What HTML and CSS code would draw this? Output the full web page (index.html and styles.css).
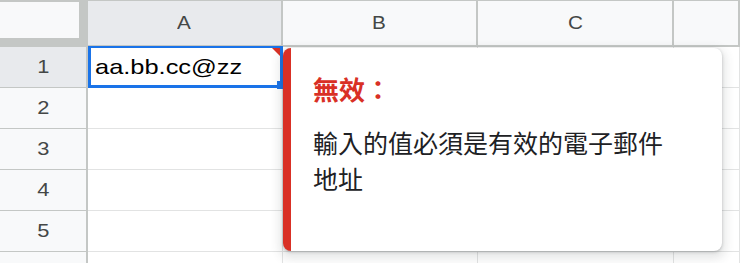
FILE: index.html
```html
<!DOCTYPE html>
<html lang="zh-Hant">
<head>
<meta charset="utf-8">
<title>Sheet validation</title>
<link rel="stylesheet" href="styles.css">
</head>
<body>
<div class="page">
  <div class="sheet">
    <div class="corner"><div class="corner-inner"></div></div>
    <div class="colhead sel"><span class="lbl">A</span></div>
    <div class="colhead"><span class="lbl">B</span></div>
    <div class="colhead"><span class="lbl">C</span></div>
    <div class="colhead"></div>

    <div class="rowhead sel"><span class="lbl">1</span></div>
    <div class="cell a1">
      <span class="val">aa.bb.cc@zz</span>
      <span class="flag"></span>
      <span class="handle"></span>
    </div>
    <div class="cell"></div><div class="cell"></div><div class="cell"></div>

    <div class="rowhead"><span class="lbl">2</span></div>
    <div class="cell"></div><div class="cell"></div><div class="cell"></div><div class="cell"></div>

    <div class="rowhead"><span class="lbl">3</span></div>
    <div class="cell"></div><div class="cell"></div><div class="cell"></div><div class="cell"></div>

    <div class="rowhead"><span class="lbl">4</span></div>
    <div class="cell"></div><div class="cell"></div><div class="cell"></div><div class="cell"></div>

    <div class="rowhead"><span class="lbl">5</span></div>
    <div class="cell"></div><div class="cell"></div><div class="cell"></div><div class="cell"></div>

    <div class="rowhead"></div>
    <div class="cell"></div><div class="cell"></div><div class="cell"></div><div class="cell"></div>
  </div>

  <div class="popup">
    <div class="popup-title">無效：</div>
    <div class="popup-text">輸入的值必須是有效的電子郵件地址</div>
  </div>
</div>
</body>
</html>
```

FILE: styles.css
```css
html, body {
  margin: 0;
  padding: 0;
  background: #ffffff;
  overflow: hidden;
}

.page {
  position: relative;
  width: 740px;
  height: 263px;
  overflow: hidden;
  font-family: "Liberation Sans", Arial, sans-serif;
}

.sheet {
  display: grid;
  grid-template-columns: 88px 195px 195px 196px 1fr;
  grid-template-rows: 47px repeat(5, 41px) 41px;
}

.corner {
  background: #c4c7c5;
  border-top: 1px solid #c4c7c5;
  box-sizing: border-box;
}

.corner-inner {
  width: 79px;
  height: 36px;
  margin-top: 1px;
  background: #f8f9fa;
}

.colhead {
  box-sizing: border-box;
  background: #f8f9fa;
  border-top: 1px solid #c4c7c5;
  border-bottom: 2px solid #c4c7c5;
  border-right: 2px solid #c4c7c5;
  display: flex;
  align-items: center;
  justify-content: center;
  color: #444746;
  font-size: 18px;
}

.colhead.sel,
.rowhead.sel {
  background: #e8eaed;
}

.rowhead {
  box-sizing: border-box;
  background: #f8f9fa;
  border-right: 2px solid #c4c7c5;
  border-bottom: 1px solid #c4c7c5;
  display: flex;
  align-items: center;
  justify-content: center;
  color: #444746;
  font-size: 19px;
}

.lbl {
  display: inline-block;
  transform: scaleX(1.15);
}

.cell {
  box-sizing: border-box;
  background: #ffffff;
  border-right: 1px solid #e2e3e3;
  border-bottom: 1px solid #e2e3e3;
}

.cell.a1 {
  position: relative;
  border: 3px solid #1a73e8;
  border-top-width: 2px;
  margin-top: -1px;
  display: flex;
  align-items: center;
  padding-left: 4px;
  padding-top: 1px;
}

.val {
  display: inline-block;
  font-size: 21px;
  color: #000000;
  transform: scaleX(1.21);
  transform-origin: left center;
  white-space: nowrap;
}

.flag {
  position: absolute;
  top: 0;
  right: 0;
  width: 0;
  height: 0;
  border-top: 8px solid #d93025;
  border-left: 8px solid transparent;
}

.handle {
  position: absolute;
  right: -3px;
  bottom: -4px;
  width: 6px;
  height: 8px;
  background: #1a73e8;
}

.popup {
  position: absolute;
  left: 283px;
  top: 48px;
  width: 439px;
  height: 203px;
  box-sizing: border-box;
  background: #ffffff;
  border-left: 8px solid #d93025;
  border-radius: 8px;
  box-shadow: 0 1px 3px rgba(60, 64, 67, 0.3), 0 4px 10px 4px rgba(60, 64, 67, 0.12);
  padding: 23px 20px 0 22px;
  font-family: "Noto Sans CJK TC", "Noto Sans CJK SC", sans-serif;
}

.popup-title {
  color: #d93025;
  font-size: 26px;
  font-weight: bold;
  line-height: 36px;
}

.popup-text {
  margin-top: 17px;
  max-width: 360px;
  color: #202124;
  font-size: 25px;
  line-height: 36px;
}
```
